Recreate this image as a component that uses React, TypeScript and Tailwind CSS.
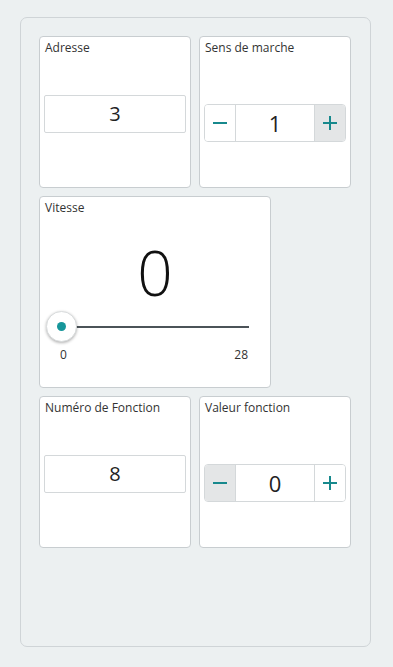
import React from "react";

const font = { fontFamily: '"Open Sans", "Noto Sans", sans-serif' };

function Card({ label, className, children }: { label: string; className: string; children: React.ReactNode }) {
  return (
    <div className={`flex flex-col rounded-[4px] border border-[#c8cdd0] bg-white ${className}`}>
      <div className="px-[5px] pt-[2px] text-[12px] leading-[18px] text-[#333]">{label}</div>
      {children}
    </div>
  );
}

function Stepper({ value, active }: { value: string; active: "minus" | "plus" }) {
  return (
    <div className="mx-[4px] flex h-[38px] overflow-hidden rounded-[4px] border border-[#d4d8da]">
      <div className={`flex w-[31px] items-center justify-center border-r border-[#d4d8da] ${active === "minus" ? "bg-[#e4e6e7]" : "bg-white"}`}>
        <svg width="16" height="16" viewBox="0 0 16 16"><rect x="1" y="7" width="14" height="2" fill="#17898d" /></svg>
      </div>
      <div className="flex flex-1 items-center justify-center text-[22px] text-[#222]">{value}</div>
      <div className={`flex w-[31px] items-center justify-center border-l border-[#d4d8da] ${active === "plus" ? "bg-[#e4e6e7]" : "bg-white"}`}>
        <svg width="16" height="16" viewBox="0 0 16 16"><rect x="1" y="7" width="14" height="2" fill="#17898d" /><rect x="7" y="1" width="2" height="14" fill="#17898d" /></svg>
      </div>
    </div>
  );
}

function NumInput({ value }: { value: string }) {
  return (
    <div className="mx-[4px] flex h-[38px] items-center justify-center rounded-[2px] border border-[#d4d8da] text-[20px] text-[#222]">
      {value}
    </div>
  );
}

export default function App() {
  return (
    <div className="min-h-[667px] w-[393px] bg-[#ecf0f1] pt-[17px]" style={font}>
      <div className="ml-[20px] flex h-[630px] w-[351px] flex-col gap-[8px] rounded-[7px] border border-[#cfd4d7] px-[18px] pt-[18px]">
        <div className="flex gap-[8px]">
          <Card label="Adresse" className="h-[152px] w-[152px]">
            <div className="pt-[38px]">
              <NumInput value="3" />
            </div>
          </Card>
          <Card label="Sens de marche" className="h-[152px] w-[152px]">
            <div className="pt-[47px]">
              <Stepper value="1" active="plus" />
            </div>
          </Card>
        </div>
        <div className="flex">
          <Card label="Vitesse" className="h-[192px] w-[232px]">
            <div className="flex justify-center pt-[15px] text-[62px] font-light leading-[80px] text-[#111]">0</div>
            <div className="relative mx-[6px] mt-[-1px] h-[32px]">
              <div className="absolute left-[30px] right-[15px] top-[15px] h-[2px] bg-[#4b5358]" />
              <div className="absolute left-0 top-0 flex h-[31px] w-[31px] items-center justify-center rounded-full border border-[#d9dcdd] bg-white shadow-[0_1px_3px_rgba(0,0,0,0.3)]">
                <div className="h-[9px] w-[9px] rounded-full bg-[#16969a]" />
              </div>
            </div>
            <div className="ml-[20px] mr-[22px] mt-[4px] flex justify-between text-[12px] leading-[16px] text-[#333]">
              <span>0</span>
              <span>28</span>
            </div>
          </Card>
        </div>
        <div className="flex gap-[8px]">
          <Card label="Numéro de Fonction" className="h-[152px] w-[152px]">
            <div className="pt-[38px]">
              <NumInput value="8" />
            </div>
          </Card>
          <Card label="Valeur fonction" className="h-[152px] w-[152px]">
            <div className="pt-[47px]">
              <Stepper value="0" active="minus" />
            </div>
          </Card>
        </div>
      </div>
    </div>
  );
}
